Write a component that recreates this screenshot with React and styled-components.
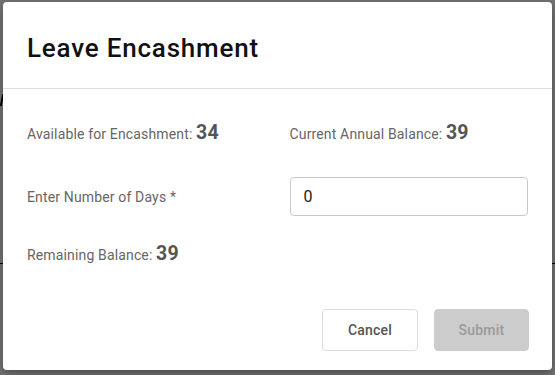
import React from "react";
import styled, { createGlobalStyle } from "styled-components";

const Global = createGlobalStyle`
  html, body { margin: 0; padding: 0; }
  body { font-family: Roboto, "Liberation Sans", Arial, sans-serif; background: #fff; }
  * { box-sizing: border-box; }
`;

const Page = styled.div`
  width: 555px;
  height: 375px;
  position: relative;
  overflow: hidden;
  background: #fff;
`;

const PageMark = styled.div`
  margin-top: 94px;
  width: 2px;
  height: 12px;
  margin-left: 1px;
  background: #000;
  transform: skewX(-12deg);
`;

const PageRule = styled.div`
  margin-top: 157px;
  height: 1px;
  background: #000;
`;

const Backdrop = styled.div`
  position: absolute;
  inset: 0;
  background: rgba(0, 0, 0, 0.55);
  display: flex;
  align-items: flex-start;
  justify-content: flex-start;
  padding: 2px 3px;
`;

const Dialog = styled.div`
  width: 549px;
  height: 368px;
  background: #fff;
  border-radius: 4px;
  box-shadow: 0 3px 8px rgba(0, 0, 0, 0.35);
  display: flex;
  flex-direction: column;
`;

const Header = styled.div`
  padding: 32px 24px 26px;
  border-bottom: 1px solid #dcdcdc;
`;

const Title = styled.h2`
  margin: 0;
  font-size: 26px;
  line-height: 28px;
  letter-spacing: 0.8px;
  font-weight: 500;
  color: #111;
`;

const Body = styled.div`
  display: grid;
  grid-template-columns: 1fr 1fr;
  column-gap: 24px;
  padding: 0 24px;
`;

const Cell = styled.div`
  margin-top: ${(p) => p.$mt}px;
  min-height: ${(p) => p.$h}px;
  display: flex;
  align-items: center;
  font-size: 14px;
  letter-spacing: 0.15px;
  line-height: 24px;
  color: #666;
`;

const Line = styled.div`
  font-size: 14px;
  line-height: 24px;
  color: #666;
`;

const Value = styled.span`
  font-size: 19.5px;
  font-weight: 700;
  color: #555;
`;

const Input = styled.input`
  width: 100%;
  height: 39px;
  border: 1px solid #c8c8c8;
  border-radius: 4px;
  padding: 0 13px;
  font-family: Roboto, "Liberation Sans", Arial, sans-serif;
  font-size: 16px;
  color: #222;
  outline: none;
`;

const Footer = styled.div`
  margin-top: auto;
  display: flex;
  justify-content: flex-end;
  gap: 16px;
  padding: 0 23px 19px 24px;
`;

const Button = styled.button`
  width: ${(p) => p.$w}px;
  height: 42px;
  border-radius: 4px;
  font-family: Roboto, "Liberation Sans", Arial, sans-serif;
  font-size: 14px;
  letter-spacing: 0.2px;
  font-weight: 500;
  border: 1px solid ${(p) => (p.$primary ? "#cccccc" : "#dcdcdc")};
  background: ${(p) => (p.$primary ? "#cccccc" : "#fff")};
  color: ${(p) => (p.$primary ? "#9a9a9a" : "#555")};
  cursor: pointer;
`;

export default function App() {
  return (
    <>
      <Global />
      <Page>
        <PageMark />
        <PageRule />
        <Backdrop>
          <Dialog>
            <Header>
              <Title>Leave Encashment</Title>
            </Header>
            <Body>
              <Cell $mt={32} $h={25}>
                <Line>
                  Available for Encashment: <Value>34</Value>
                </Line>
              </Cell>
              <Cell $mt={32} $h={25}>
                <Line>
                  Current Annual Balance: <Value>39</Value>
                </Line>
              </Cell>
              <Cell $mt={31} $h={39}>
                Enter Number of Days *
              </Cell>
              <Cell $mt={31} $h={39}>
                <Input defaultValue="0" />
              </Cell>
              <Cell $mt={26} $h={25}>
                <Line>
                  Remaining Balance: <Value>39</Value>
                </Line>
              </Cell>
              <div />
            </Body>
            <Footer>
              <Button $w={96}>Cancel</Button>
              <Button $w={95} $primary disabled>
                Submit
              </Button>
            </Footer>
          </Dialog>
        </Backdrop>
      </Page>
    </>
  );
}
